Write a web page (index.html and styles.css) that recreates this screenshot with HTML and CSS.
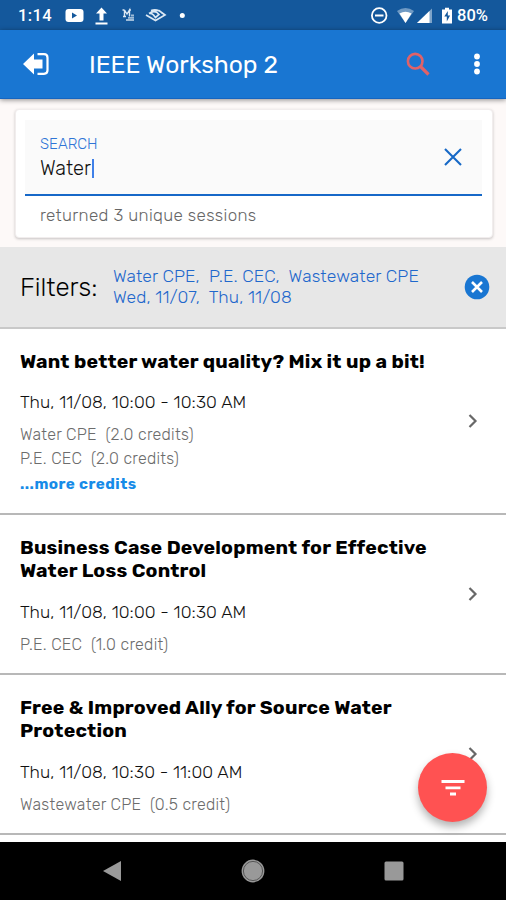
FILE: index.html
```
<!DOCTYPE html>
<html lang="en">
<head>
<meta charset="utf-8">
<title>IEEE Workshop 2</title>
<link rel="stylesheet" href="styles.css">
</head>
<body>
<div class="screen">
  <div class="status">
    <span class="clock">1:14</span>
    <svg class="notes" width="130" height="30" viewBox="60 0 130 30">
      <rect x="65.500" y="9" width="18" height="13" rx="3" fill="#fff"/><path d="M72 12.500v6l5-3z" fill="#14589c"/>
      <path d="M101.500 7.500l5.500 6h-3.500v7h-4v-7H96zM95.500 22.500h12v2h-12z" fill="#fff"/>
      <path d="M124.500 10v6.500M124.500 10l2.500 4 2.500-4v6.500M122.500 10h2M129 10h2M123 16.500h3" stroke="#dbe7f3" stroke-width="1.400" fill="none"/>
      <path d="M126 20h8M128 17.800h6M131 15.500h3" stroke="#9dbbd8" stroke-width="1.800"/>
      <path d="M146 15l9.500 5.500 9.500-5.500-6-4.500q-5-1-9 2.500M149 13.500q6-4 10 1l-3.500 3-2-2.500q-2-2-4.500-1.500M151 10.500q7-2 11.500 3" stroke="#dce8f4" stroke-width="1.700" fill="none"/>
      <circle cx="182.300" cy="15.500" r="2.500" fill="#fff"/>
    </svg>
    <svg class="signals" width="90" height="30" viewBox="366 0 90 30">
      <circle cx="379.200" cy="15.500" r="7.300" fill="none" stroke="#fff" stroke-width="1.800"/><path d="M375 15.500h8.500" stroke="#fff" stroke-width="2"/>
      <path d="M397 11q8.500-6 17 0L405.500 23z" fill="#6f9ac4"/><path d="M399.500 13.500q6-3.500 12 0L405.500 23z" fill="#fff"/>
      <path d="M417 23l15-14.500V23z" fill="#7ea4c9"/><path d="M417 23l12.500-12V23z" fill="#fff"/>
      <path d="M442 9.500h3v-1.800h4v1.800h3V23.500h-10z" fill="#fff"/><path d="M447.800 11l-3.500 5.500h2.500v5l3.300-6h-2.300z" fill="#14589c"/>
    </svg>
    <span class="battery">80%</span>
  </div>

  <header class="appbar">
    <svg class="exit" width="30" height="26" viewBox="0 0 30 26">
      <path d="M2 13L13 2.500V8.500h8.500v9H13V23.500z" fill="#fff"/>
      <path d="M16.500 3.200H23q3.500 0 3.500 3.500v12.600q0 3.500-3.500 3.500h-6.500" fill="none" stroke="#fff" stroke-width="2.200"/>
    </svg>
    <h1 class="heading">IEEE Workshop 2</h1>
    <svg class="lens" width="24" height="24" viewBox="0 0 24 24" fill="none" stroke="#df6269"><circle cx="9.200" cy="9.200" r="7.300" stroke-width="2.600"/><path d="M14.500 14.500l8 8" stroke-width="3.200"/></svg>
    <svg class="dots" width="8" height="24" viewBox="0 0 8 24" fill="#fff"><circle cx="4" cy="4.500" r="2.900"/><circle cx="4" cy="12" r="2.900"/><circle cx="4" cy="19.500" r="2.900"/></svg>
  </header>

  <section class="search">
    <div class="card">
      <div class="field">
        <div class="input">
          <span class="label">SEARCH</span>
          <span class="entry"><span class="value">Water</span><i class="caret"></i></span>
        </div>
        <svg width="18" height="18" viewBox="0 0 18 18"><path d="M1 1l16 16M17 1L1 17" stroke="#1668c6" stroke-width="2.100"/></svg>
      </div>
      <p class="result">returned 3 unique sessions</p>
    </div>
  </section>

  <section class="filters">
    <span class="filters-title">Filters:</span>
    <div class="filters-list"><div>Water CPE,&nbsp; P.E. CEC,&nbsp; Wastewater CPE</div><div>Wed, 11/07,&nbsp; Thu, 11/08</div></div>
    <svg width="26" height="26" viewBox="0 0 26 26"><circle cx="13" cy="13" r="12.300" fill="#1976d2"/><path d="M8 8l10 10M18 8L8 18" stroke="#fff" stroke-width="2.600"/></svg>
  </section>

  <main class="sessions">
    <article class="session first">
      <div class="info">
        <h2 class="title">Want better water quality? Mix it up a bit!</h2>
        <p class="time">Thu, 11/08, 10:00 - 10:30 AM</p>
        <p class="credit">Water CPE&nbsp; (2.0 credits)</p>
        <p class="credit">P.E. CEC&nbsp; (2.0 credits)</p>
        <p class="more">...more credits</p>
      </div>
      <svg class="chevron" width="10" height="16" viewBox="0 0 10 16"><path d="M1.500 2l6 6-6 6" /></svg>
    </article>
    <article class="session">
      <div class="info">
        <h2 class="title">Business Case Development for Effective<br>Water Loss Control</h2>
        <p class="time">Thu, 11/08, 10:00 - 10:30 AM</p>
        <p class="credit">P.E. CEC&nbsp; (1.0 credit)</p>
      </div>
      <svg class="chevron" width="10" height="16" viewBox="0 0 10 16"><path d="M1.500 2l6 6-6 6" /></svg>
    </article>
    <article class="session">
      <div class="info">
        <h2 class="title">Free &amp; Improved Ally for Source Water<br>Protection</h2>
        <p class="time">Thu, 11/08, 10:30 - 11:00 AM</p>
        <p class="credit">Wastewater CPE&nbsp; (0.5 credit)</p>
      </div>
      <svg class="chevron" width="10" height="16" viewBox="0 0 10 16"><path d="M1.500 2l6 6-6 6" /></svg>
    </article>
  </main>

  <button class="fab" aria-label="Filter"><svg width="24" height="18" viewBox="0 0 24 18" stroke="#fff" stroke-width="2.800"><path d="M.5 2.500h23M4.500 8.800h15M9 15h6"/></svg></button>

  <nav class="system">
    <svg width="20" height="22" viewBox="0 0 20 22"><path d="M1 11L19 1v20z" fill="#999"/></svg>
    <svg width="26" height="26" viewBox="0 0 26 26"><circle cx="13" cy="13" r="11.400" fill="#999"/><circle cx="13" cy="13" r="9.600" fill="none" stroke="#555" stroke-width="1"/></svg>
    <svg width="20" height="20" viewBox="0 0 20 20"><rect x=".5" y=".5" width="19" height="19" rx="1.500" fill="#999"/></svg>
  </nav>
</div>
</body>
</html>
```
FILE: styles.css
```
* { box-sizing: border-box; }
body, h1, h2, p { margin: 0; }
body { font-family: Rubik, Inter, Roboto, sans-serif; font-weight: 300; background: #fff; color: #000; }
svg { display: block; flex: none; }
.screen { position: relative; width: 506px; height: 900px; overflow: hidden; display: flex; flex-direction: column; white-space: nowrap; }

.status { flex: none; height: 30px; background: #14589c; display: flex; align-items: center; color: #fff; font: 500 16.500px/30px Roboto, sans-serif; padding-left: 18px; }
.clock { width: 42px; letter-spacing: .4px; padding-top: 2px; }
.signals { margin-left: 176px; }
.battery { margin-left: 1px; padding-top: 2px; }

.appbar { flex: none; height: 69px; background: #1976d2; border-bottom: 1px solid #1565c0; display: flex; align-items: center; padding: 0 25px 0 21px; box-shadow: 0 1px 5px rgba(0,0,0,.45); position: relative; z-index: 1; }
.heading { margin-left: 38px; font: 400 24.600px/30px Rubik, Roboto, sans-serif; color: #fff; flex: 1; padding-top: 2px; }
.dots { margin-left: 43px; }

.search { flex: none; height: 148px; background: #fdf9f8; padding: 10px 13px 9px 15px; }
.card { height: 129px; background: #fff; border: 1px solid #f1eded; border-radius: 4px; box-shadow: 0 1px 3px rgba(0,0,0,.22); padding: 10px 10px 0 9px; }
.field { height: 76px; background: #fafafa; border-bottom: 2px solid #1668c8; display: flex; justify-content: space-between; align-items: center; padding: 0 20px 0 15px; }
.input { display: flex; flex-direction: column; padding-top: 4px; }
.label { font-size: 15px; line-height: 18px; color: #2f75d6; }
.entry { display: flex; align-items: center; height: 31px; font-size: 20px; color: #111; }
.caret { width: 2px; height: 19px; margin-left: 1px; background: #3f80e8; }
.result { margin: 9px 0 0 15px; font-size: 17px; line-height: 20px; color: #666; letter-spacing: .33px; }

.filters { flex: none; height: 82px; background: #e7e7e7; border-bottom: 2px solid #c9c9c9; display: flex; align-items: center; padding: 0 16px 0 20px; }
.filters-title { width: 93px; font-size: 25.800px; color: #000; }
.filters-list { flex: 1; font-size: 17.500px; line-height: 21px; color: #1f68cc; letter-spacing: .12px; }

.session { height: 160px; border-bottom: 2px solid #b8b8b8; display: flex; justify-content: space-between; align-items: center; padding: 0 28px 0 20px; }
.session.first { height: 186px; }
.info { align-self: flex-start; padding-top: 21px; }
.title { font-size: 19.500px; line-height: 23px; font-weight: 700; letter-spacing: .18px; }
.time { margin-top: 19px; font-size: 17.500px; line-height: 22px; color: #111; letter-spacing: .11px; }
.first .time { margin-top: 18px; }
.credit { font-size: 16px; line-height: 24px; color: #6c6c6c; letter-spacing: .26px; }
.time + .credit { margin-top: 10px; }
.more { font-size: 15.200px; line-height: 26px; font-weight: 700; color: #168be8; letter-spacing: .48px; }
.chevron { fill: none; stroke: #686868; stroke-width: 2.200; }

.fab { position: absolute; left: 418px; top: 753px; width: 69px; height: 69px; border: 0; border-radius: 50%; background: #ff5252; display: flex; align-items: center; justify-content: center; box-shadow: 0 5px 9px rgba(0,0,0,.3); padding: 0; }

.system { margin-top: auto; flex: none; height: 58px; background: #000; display: flex; justify-content: space-between; align-items: center; padding: 0 102px; }
```
